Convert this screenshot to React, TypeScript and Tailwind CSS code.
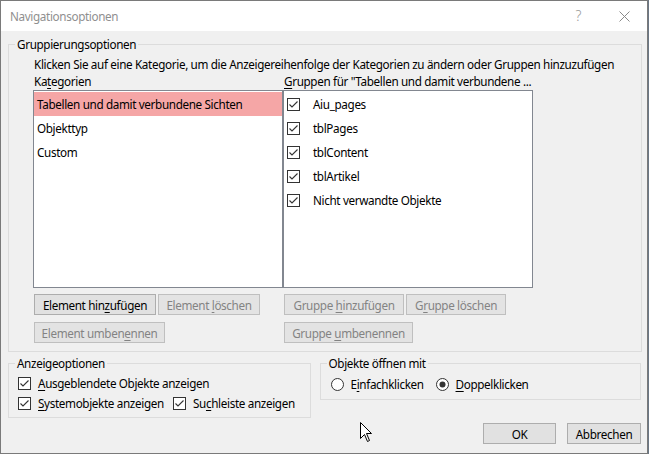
import {ReactNode} from 'react';

const font = {fontFamily: '"Noto Sans", "Open Sans", sans-serif'};

// "&x" marks the accelerator letter, drawn underlined
const Label = ({text}: {text: string}) => {
  const i = text.indexOf('&');
  if (i < 0) return <span className="whitespace-pre">{text}</span>;
  return (
    <span className="whitespace-pre">
      {text.slice(0, i)}
      <span className="underline underline-offset-2">{text[i + 1]}</span>
      {text.slice(i + 2)}
    </span>
  );
};

const CheckBox = () => (
  <svg width="13" height="13" viewBox="0 0 13 13" className="shrink-0">
    <rect x="0.5" y="0.5" width="12" height="12" fill="#fff" stroke="#333" />
    <polyline points="2.5,6.5 5,9 10.5,3.5" fill="none" stroke="#333" strokeWidth="1.1" />
  </svg>
);

const Radio = ({on}: {on?: boolean}) => (
  <svg width="13" height="13" viewBox="0 0 13 13" className="shrink-0">
    <circle cx="6.5" cy="6.5" r="6" fill="#fff" stroke="#333" />
    {on && <circle cx="6.5" cy="6.5" r="3" fill="#333" />}
  </svg>
);

const Button = ({text, w, disabled}: {text: string; w: string; disabled?: boolean}) => (
  <div
    className={
      disabled
        ? `${w} flex h-[21px] shrink-0 items-center justify-center border border-[#bfbfbf] bg-[#e3e3e3] text-[#838383]`
        : `${w} flex h-[21px] shrink-0 items-center justify-center border border-[#adadad] bg-[#e1e1e1] text-black`
    }>
    <Label text={text} />
  </div>
);

const Group = ({legend, className, inner, children}: {legend: string; className: string; inner: string; children: ReactNode}) => (
  <fieldset className={`border border-[#dcdcdc] ${className}`}>
    <legend className="ml-[6px] h-[16px] px-[2px] leading-[16px]">{legend}</legend>
    <div className={inner}>{children}</div>
  </fieldset>
);

const Cursor = () => (
  <svg width="13" height="21" viewBox="0 0 13 21" className="absolute left-[360px] top-[422px]">
    <path d="M0.5 0.5 L0.5 16.5 L4.5 12.5 L7.5 19.5 L9.5 18.5 L6.5 11.5 L11.5 11.5 Z" fill="#fff" stroke="#000" />
  </svg>
);

const categories = ['Tabellen und damit verbundene Sichten', 'Objekttyp', 'Custom'];
const groups = ['Aiu_pages', 'tblPages', 'tblContent', 'tblArtikel', 'Nicht verwandte Objekte'];

export default function App() {
  return (
    <div
      className="relative h-[454px] w-[649px] overflow-hidden bg-[#6b7785] text-[11.7px] leading-[16px] tracking-[-0.35px] text-black"
      style={font}>
      <div className="flex h-[454px] w-[648px] flex-col border border-[#7a7a7a] bg-[#f0f0f0]">
        {/* title bar */}
        <div className="flex h-[30px] shrink-0 items-center bg-white pl-[9px] text-[#8f8f8f]">
          <span className="flex-1">Navigationsoptionen</span>
          <span className="mr-[38px] text-[14px] font-light text-[#9a9a9a]">?</span>
          <svg width="11" height="11" viewBox="0 0 11 11" className="mr-[17px]">
            <path d="M0.5 0.5 L10.5 10.5 M10.5 0.5 L0.5 10.5" stroke="#8a8a8a" strokeWidth="1" />
          </svg>
        </div>

        <div className="flex flex-col pl-[7px] pr-[6px]">
          <Group legend="Gruppierungsoptionen" className="mt-[5px] w-[634px]" inner="pb-[8px] pl-[24px]">
            <div className="mt-[4px] whitespace-nowrap pl-[1px]">
              Klicken Sie auf eine Kategorie, um die Anzeigereihenfolge der Kategorien zu ändern oder Gruppen hinzuzufügen
            </div>
            <div className="mt-[1px] flex h-[17px]">
              <div className="w-[250px] pl-[1px]">
                <Label text="Ka&tegorien" />
              </div>
              <div className="pl-[1px]">
                <Label text={'&Gruppen für "Tabellen und damit verbundene ...'} />
              </div>
            </div>
            <div className="flex">
              <div className="h-[198px] w-[250px] border border-[#828790] bg-white pt-[1px]">
                {categories.map((c, i) => (
                  <div
                    key={c}
                    className={i === 0 ? 'flex h-[24px] items-center bg-[#f5a6a6] pl-[3px]' : 'flex h-[24px] items-center pl-[3px]'}>
                    {c}
                  </div>
                ))}
              </div>
              <div className="h-[198px] w-[250px] border border-[#828790] bg-white pt-[1px]">
                {groups.map(g => (
                  <div key={g} className="flex h-[24px] items-center gap-[13px] pl-[3px]">
                    <CheckBox />
                    <span>{g}</span>
                  </div>
                ))}
              </div>
            </div>
            <div className="mt-[6px] flex">
              <div className="flex w-[250px] flex-col gap-[7px] pl-[1px]">
                <div className="flex gap-[2px]">
                  <Button text="Element hin&zufügen" w="w-[122px]" />
                  <Button text="Element &löschen" w="w-[102px]" disabled />
                </div>
                <Button text="Element umben&ennen" w="w-[131px]" disabled />
              </div>
              <div className="flex flex-col gap-[7px] pl-[1px]">
                <div className="flex gap-[2px]">
                  <Button text="Gruppe &hinzufügen" w="w-[120px]" disabled />
                  <Button text="G&ruppe löschen" w="w-[100px]" disabled />
                </div>
                <Button text="Gruppe &umbenennen" w="w-[129px]" disabled />
              </div>
            </div>
          </Group>

          <div className="mt-[3px] flex items-start gap-[9px]">
            <Group legend="Anzeigeoptionen" className="w-[303px]" inner="pb-[4px] pl-[9px] pt-[2px]">
              <div className="flex h-[20px] items-center gap-[7px]">
                <CheckBox />
                <Label text="&Ausgeblendete Objekte anzeigen" />
              </div>
              <div className="flex h-[20px] items-center">
                <div className="flex w-[155px] items-center gap-[7px]">
                  <CheckBox />
                  <Label text="&Systemobjekte anzeigen" />
                </div>
                <div className="flex items-center gap-[7px]">
                  <CheckBox />
                  <Label text="Su&chleiste anzeigen" />
                </div>
              </div>
            </Group>
            <Group legend="Objekte öffnen mit" className="w-[322px]" inner="pb-[5px] pl-[10px] pt-[3px]">
              <div className="flex h-[20px] items-center">
                <div className="flex w-[105px] items-center gap-[7px]">
                  <Radio />
                  <Label text="E&infachklicken" />
                </div>
                <div className="flex items-center gap-[7px]">
                  <Radio on />
                  <Label text="&Doppelklicken" />
                </div>
              </div>
            </Group>
          </div>

          <div className="mt-[5px] flex justify-end gap-[11px]">
            <Button text="OK" w="w-[73px]" />
            <Button text="Abbrechen" w="w-[74px]" />
          </div>
        </div>
      </div>
      <Cursor />
    </div>
  );
}
